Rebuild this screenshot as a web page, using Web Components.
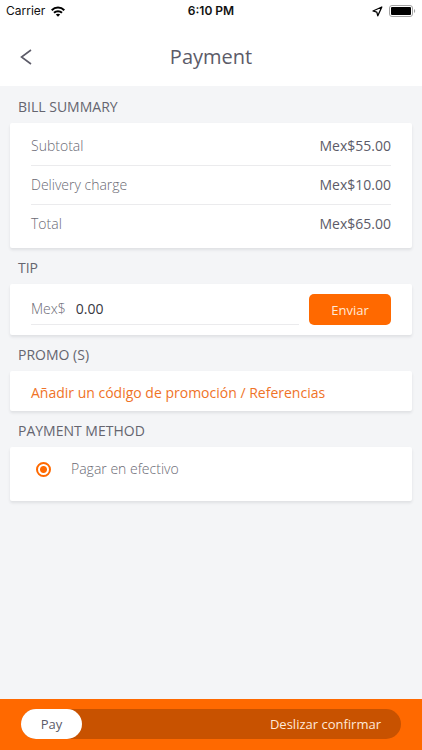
<!DOCTYPE html>
<html lang="es">
<head>
<meta charset="utf-8">
<meta name="viewport" content="width=device-width, initial-scale=1">
<title>Payment</title>
<style>
  html, body { margin: 0; height: 100%; }
  body {
    --orange: #ff6900; --ink: #5c5b68; --muted: #6a6a74; --line: #ebebed;
    font-family: "Open Sans", "Noto Sans", sans-serif;
    font-size: 14px; line-height: 20px; color: var(--ink); background: #f4f5f7;
  }
</style>
</head>
<body>
<payment-screen></payment-screen>
<script>
  function define(name, markup, setup) {
    const template = document.createElement('template');
    template.innerHTML = markup;
    customElements.define(name, class extends HTMLElement {
      constructor() {
        super();
        this.attachShadow({ mode: 'open' }).append(template.content.cloneNode(true));
      }
      connectedCallback() { if (setup) setup(this, this.shadowRoot); }
    });
  }

  define('status-bar', `
    <style>
      :host { display: grid; grid-template-columns: 1fr auto 1fr; align-items: center; height: 22px; padding: 0 6px; color: #111; font-family: Inter, sans-serif; font-size: 12px; line-height: 16px; }
      .left, .right { display: flex; align-items: center; gap: 6px; }
      .right { justify-content: flex-end; }
      .time { font-weight: 600; }
      svg { display: block; }
    </style>
    <div class="left"><span>Carrier</span>
      <svg width="14" height="11" viewBox="0 0 14 11" fill="none" stroke="#000" stroke-width="2" aria-hidden="true">
        <path d="M.7 4.3C4.2.7 9.8.7 13.3 4.3"/><path d="M3 6.8c2.2-2.2 5.8-2.2 8 0"/><path d="M7 10.8 4.8 8.6c1.2-1.2 3.2-1.2 4.4 0z" fill="#000" stroke="none"/>
      </svg></div>
    <span class="time">6:10 PM</span>
    <div class="right">
      <svg width="11" height="11" viewBox="0 0 11 11" fill="none" stroke="#000" stroke-width="1.3" stroke-linejoin="round" aria-hidden="true"><path d="M9.8 1 1 5l3.800 1.200L5.800 9.800z"/></svg>
      <svg width="27" height="12" viewBox="0 0 27 12" aria-hidden="true">
        <rect x=".5" y=".5" width="23" height="11" rx="2.5" fill="#fff" stroke="#a3a3a3"/><rect x="2" y="2" width="20" height="8" rx="1" fill="#000"/><path d="M25 4c1.6.6 1.6 3.4 0 4z" fill="#a3a3a3"/>
      </svg></div>`);

  define('nav-header', `
    <style>
      :host { display: grid; grid-template-columns: 40px 1fr 40px; align-items: center; height: 64px; padding: 6px 6px 0; box-sizing: border-box; }
      button { width: 40px; height: 40px; padding: 0; border: 0; background: none; color: inherit; display: grid; place-items: center; }
      h1 { margin: 0; font-size: 20px; line-height: 28px; font-weight: 400; text-align: center; }
    </style>
    <button type="button" aria-label="Back"><svg width="12" height="16" viewBox="0 0 12 16" fill="none" stroke="currentColor" stroke-width="1.6"><path d="M11 1 1.500 8l9.500 7"/></svg></button>
    <h1><slot></slot></h1>`);

  define('card-section', `
    <style>
      :host { display: block; }
      h2 { margin: 0; padding: 10px 8px 6px; font-size: 14px; line-height: 20px; font-weight: 400; color: #65656f; }
      .card { background: #fff; border-radius: 2px; box-shadow: 0 2px 3px rgba(40, 45, 60, .10); }
    </style>
    <h2></h2><div class="card"><slot></slot></div>`,
    (host, root) => { root.querySelector('h2').textContent = host.getAttribute('heading'); });

  define('bill-row', `
    <style>
      :host { display: flex; justify-content: space-between; align-items: center; height: 38px; margin: 0 21px; border-bottom: 1px solid var(--line); }
      :host(:last-of-type) { border-color: transparent; }
      .label { color: var(--muted); font-weight: 300; }
    </style>
    <span class="label"><slot></slot></span><span><slot name="amount"></slot></span>`);

  define('bill-list', `<style>:host { display: block; padding: 4px 0; }</style><slot></slot>`);

  define('tip-form', `
    <style>
      form { display: flex; gap: 10px; padding: 10px 21px; }
      .field { flex: 1; min-width: 0; display: flex; align-items: center; gap: 10px; border-bottom: 1px solid var(--line); }
      label { color: var(--muted); font-weight: 300; }
      input { flex: 1; min-width: 0; padding: 0; border: 0; outline: 0; background: none; font: inherit; color: #38383f; }
      button { width: 82px; height: 31px; padding: 0; border: 0; border-radius: 5px; background: var(--orange); color: #ffe9d9; font: inherit; font-size: 13px; }
    </style>
    <form><div class="field"><label for="tip">Mex$</label><input id="tip" inputmode="decimal" value="0.00"></div>
    <button type="button">Enviar</button></form>`);

  define('promo-link', `
    <style>
      :host { display: block; padding: 12px 21px 8px; }
      a { color: #ef7327; text-decoration: none; }
    </style><a href="#promo"><slot></slot></a>`);

  define('payment-option', `
    <style>
      :host { display: block; padding: 12px 26px 22px; }
      label { display: flex; align-items: center; gap: 20px; color: var(--muted); font-weight: 300; }
      input { appearance: none; box-sizing: border-box; width: 15px; height: 15px; margin: 0; border: 2px solid var(--orange); border-radius: 50%; }
      input:checked { background: radial-gradient(circle, var(--orange) 3px, #fff 4px); }
    </style><label><input type="radio" name="method" checked><slot></slot></label>`);

  define('slide-confirm', `
    <style>
      :host { display: block; padding: 10px 21px 11px; background: var(--orange); }
      .track { display: flex; align-items: center; justify-content: space-between; height: 30px; padding-right: 20px; border-radius: 15px; background: #c85200; color: #ffe9d9; }
      button { width: 61px; height: 30px; padding: 0; border: 0; border-radius: 15px; background: #fff; color: var(--ink); font: inherit; font-size: 13px; }
      span { font-size: 13px; }
    </style>
    <div class="track"><button type="button">Pay</button><span><slot></slot></span></div>`);

  define('payment-screen', `
    <style>
      :host { display: flex; flex-direction: column; min-height: 100%; }
      header { background: #fff; }
      main { flex: 1; padding: 1px 10px 20px; }
    </style>
    <header><status-bar></status-bar><nav-header>Payment</nav-header></header>
    <main>
      <card-section heading="BILL SUMMARY"><bill-list>
        <bill-row>Subtotal<span slot="amount">Mex$55.00</span></bill-row>
        <bill-row>Delivery charge<span slot="amount">Mex$10.00</span></bill-row>
        <bill-row>Total<span slot="amount">Mex$65.00</span></bill-row>
      </bill-list></card-section>
      <card-section heading="TIP"><tip-form></tip-form></card-section>
      <card-section heading="PROMO (S)"><promo-link>Añadir un código de promoción / Referencias</promo-link></card-section>
      <card-section heading="PAYMENT METHOD"><payment-option>Pagar en efectivo</payment-option></card-section>
    </main>
    <slide-confirm>Deslizar confirmar</slide-confirm>`);
</script>
</body>
</html>
